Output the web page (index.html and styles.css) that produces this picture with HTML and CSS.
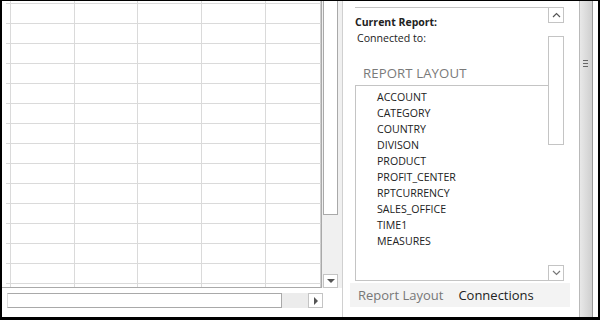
FILE: index.html
```html
<!DOCTYPE html>
<html lang="en">
<head>
  <meta charset="UTF-8">
  <title>Report Layout</title>
  <meta name="viewport" content="width=device-width, initial-scale=1.0">
  <link rel="stylesheet" href="styles.css">
</head>
<body>

<div class="frame">
  <div class="left">
    <div class="top">
      <div class="grid" id="grid"></div>
      <div class="vscroll">
        <div class="vthumb"></div>
        <div class="vtrack"></div>
        <div class="arrow-btn down-btn"><span class="tri-down"></span></div>
      </div>
    </div>
    <div class="hbar">
      <div class="hthumb"></div>
      <div class="htrack"></div>
      <div class="arrow-btn right-btn"><span class="tri-right"></span></div>
    </div>
  </div>

  <div class="panel">
    <div class="pane">
      <div class="pane-body">
        <div class="current">Current Report:</div>
        <div class="connected">Connected to:</div>
        <div class="layout-title">REPORT LAYOUT</div>
        <ul class="fields">
          <li>ACCOUNT</li>
          <li>CATEGORY</li>
          <li>COUNTRY</li>
          <li>DIVISON</li>
          <li>PRODUCT</li>
          <li>PROFIT_CENTER</li>
          <li>RPTCURRENCY</li>
          <li>SALES_OFFICE</li>
          <li>TIME1</li>
          <li>MEASURES</li>
        </ul>
      </div>
      <div class="pane-scroll">
        <div class="small-btn">
          <svg width="9" height="6" viewBox="0 0 9 6"><path d="M1 5 L4.5 1.5 L8 5" fill="none" stroke="#555" stroke-width="1.2"/></svg>
        </div>
        <div class="pthumb"></div>
        <div class="small-btn">
          <svg width="9" height="6" viewBox="0 0 9 6"><path d="M1 1 L4.5 4.5 L8 1" fill="none" stroke="#777" stroke-width="1.2"/></svg>
        </div>
      </div>
    </div>
    <div class="tabs">
      <span class="tab">Report Layout</span>
      <span class="tab active">Connections</span>
    </div>
  </div>

  <div class="dock">
    <div class="grip"><i></i><i></i><i></i></div>
  </div>
</div>

<script>
  // build the empty worksheet cells
  const grid = document.getElementById('grid');
  for (let r = 0; r < 16; r++) {
    for (let c = 0; c < 6; c++) {
      const cell = document.createElement('div');
      cell.className = c === 0 ? 'cell head' : 'cell';
      if (r === 0) cell.classList.add('first');
      grid.appendChild(cell);
    }
  }
</script>

</body>
</html>
```

FILE: styles.css
```css
:root {
  --line: #dadada;
  --edge: #a9a9a9;
  --btn: #c4c4c4;
  --track: #f0f0f0;
}

body {
  margin: 0;
  background: #fff;
  font-family: 'Open Sans', sans-serif;
  color: #222;
}

.frame {
  width: 600px;
  height: 320px;
  box-sizing: border-box;
  border: solid #000;
  border-width: 1px 2px 3px 2px;
  display: flex;
  overflow: hidden;
}

.left {
  width: 340px;
  display: flex;
  flex-direction: column;
}

.top {
  display: flex;
  height: 287px;
}

/* worksheet */
.grid {
  width: 320px;
  box-sizing: border-box;
  border-right: 1px solid var(--edge);
  border-bottom: 1px solid var(--edge);
  display: grid;
  grid-template-columns: 9px 64px 63px 64px 64px 1fr;
  grid-template-rows: 3px;
  grid-auto-rows: 20px;
  overflow: hidden;
}

.cell {
  box-sizing: border-box;
  border-right: 1px solid var(--line);
  border-bottom: 1px solid var(--line);
}

.cell:nth-child(6n) {
  border-right: 1px solid #cfcfcf;
}

.cell.head {
  border-bottom: none;
  background: linear-gradient(var(--line), var(--line)) right bottom / 4px 1px no-repeat;
}

.vscroll {
  width: 20px;
  display: flex;
  flex-direction: column;
  background: var(--track);
}

.vthumb {
  height: 214px;
  width: 15px;
  margin-left: 1px;
  box-sizing: border-box;
  border: 1px solid var(--edge);
  border-top: none;
  background: #fff;
}

.vtrack {
  flex: 1;
}

.arrow-btn {
  width: 15px;
  height: 14px;
  box-sizing: border-box;
  border: 1px solid var(--btn);
  background: #fff;
  display: flex;
  align-items: center;
  justify-content: center;
}

.down-btn {
  margin: 0 0 0 1px;
}

.tri-down {
  border-left: 4px solid transparent;
  border-right: 4px solid transparent;
  border-top: 4px solid #555;
}

.tri-right {
  border-top: 4px solid transparent;
  border-bottom: 4px solid transparent;
  border-left: 4px solid #555;
}

.hbar {
  flex: 1;
  display: flex;
  align-items: flex-start;
  padding: 5px 0 0 5px;
}

.hthumb {
  width: 275px;
  height: 15px;
  box-sizing: border-box;
  border: 1px solid var(--edge);
  border-left-color: #ddd;
  background: #fff;
}

.htrack {
  width: 26px;
  height: 15px;
  background: #ececec;
}

.right-btn {
  height: 15px;
}

/* task pane */
.panel {
  width: 237px;
  box-sizing: border-box;
  border-left: 1px solid #d0d0d0;
  padding: 6px 0 0 12px;
  display: flex;
  flex-direction: column;
}

.pane {
  width: 209px;
  height: 274px;
  box-sizing: border-box;
  border-top: 1px solid var(--btn);
  display: flex;
}

.pane-body {
  flex: 1;
  display: flex;
  flex-direction: column;
}

.current {
  font-size: 10.5px;
  font-weight: bold;
  margin-top: 7px;
  line-height: 15px;
}

.connected {
  font-size: 10.6px;
  line-height: 15px;
  margin-left: 2px;
  margin-top: 1px;
}

.layout-title {
  font-size: 13.2px;
  color: #7a7a7a;
  margin: 19px 0 0 8px;
  line-height: 16px;
  letter-spacing: 0.1px;
}

.fields {
  list-style: none;
  margin: 4px 0 0;
  padding: 3px 0 0 21px;
  flex: 1;
  border: 1px solid var(--btn);
  border-right: none;
  font-size: 10.6px;
  line-height: 16px;
}

.pane-scroll {
  width: 16px;
  display: flex;
  flex-direction: column;
}

.small-btn {
  height: 15px;
  box-sizing: border-box;
  border: 1px solid var(--btn);
  border-top: none;
  display: flex;
  align-items: center;
  justify-content: center;
}

.small-btn:last-child {
  border-top: 1px solid var(--btn);
  height: 16px;
}

.pthumb {
  height: 109px;
  margin: 13px 0 auto;
  box-sizing: border-box;
  border: 1px solid var(--btn);
}

.tabs {
  width: 220px;
  height: 24px;
  margin: 2px 0 0 -5px;
  background: #f3f3f3;
  display: flex;
  align-items: center;
  gap: 15px;
  padding-left: 8px;
  box-sizing: border-box;
  font-size: 13px;
}

.tab {
  color: #777;
}

.tab.active {
  color: #222;
}

.dock {
  width: 14px;
  margin-left: 0;
  box-sizing: border-box;
  border-left: 1px solid #b9b9b9;
  border-right: 1px solid #9a9a9a;
  background: linear-gradient(90deg, #e8e8e8, #cfcfcf);
}

.grip {
  margin: 59px 0 0 3px;
  display: flex;
  flex-direction: column;
  gap: 2px;
}

.grip i {
  display: block;
  width: 5px;
  height: 1px;
  background: #666;
}
```
